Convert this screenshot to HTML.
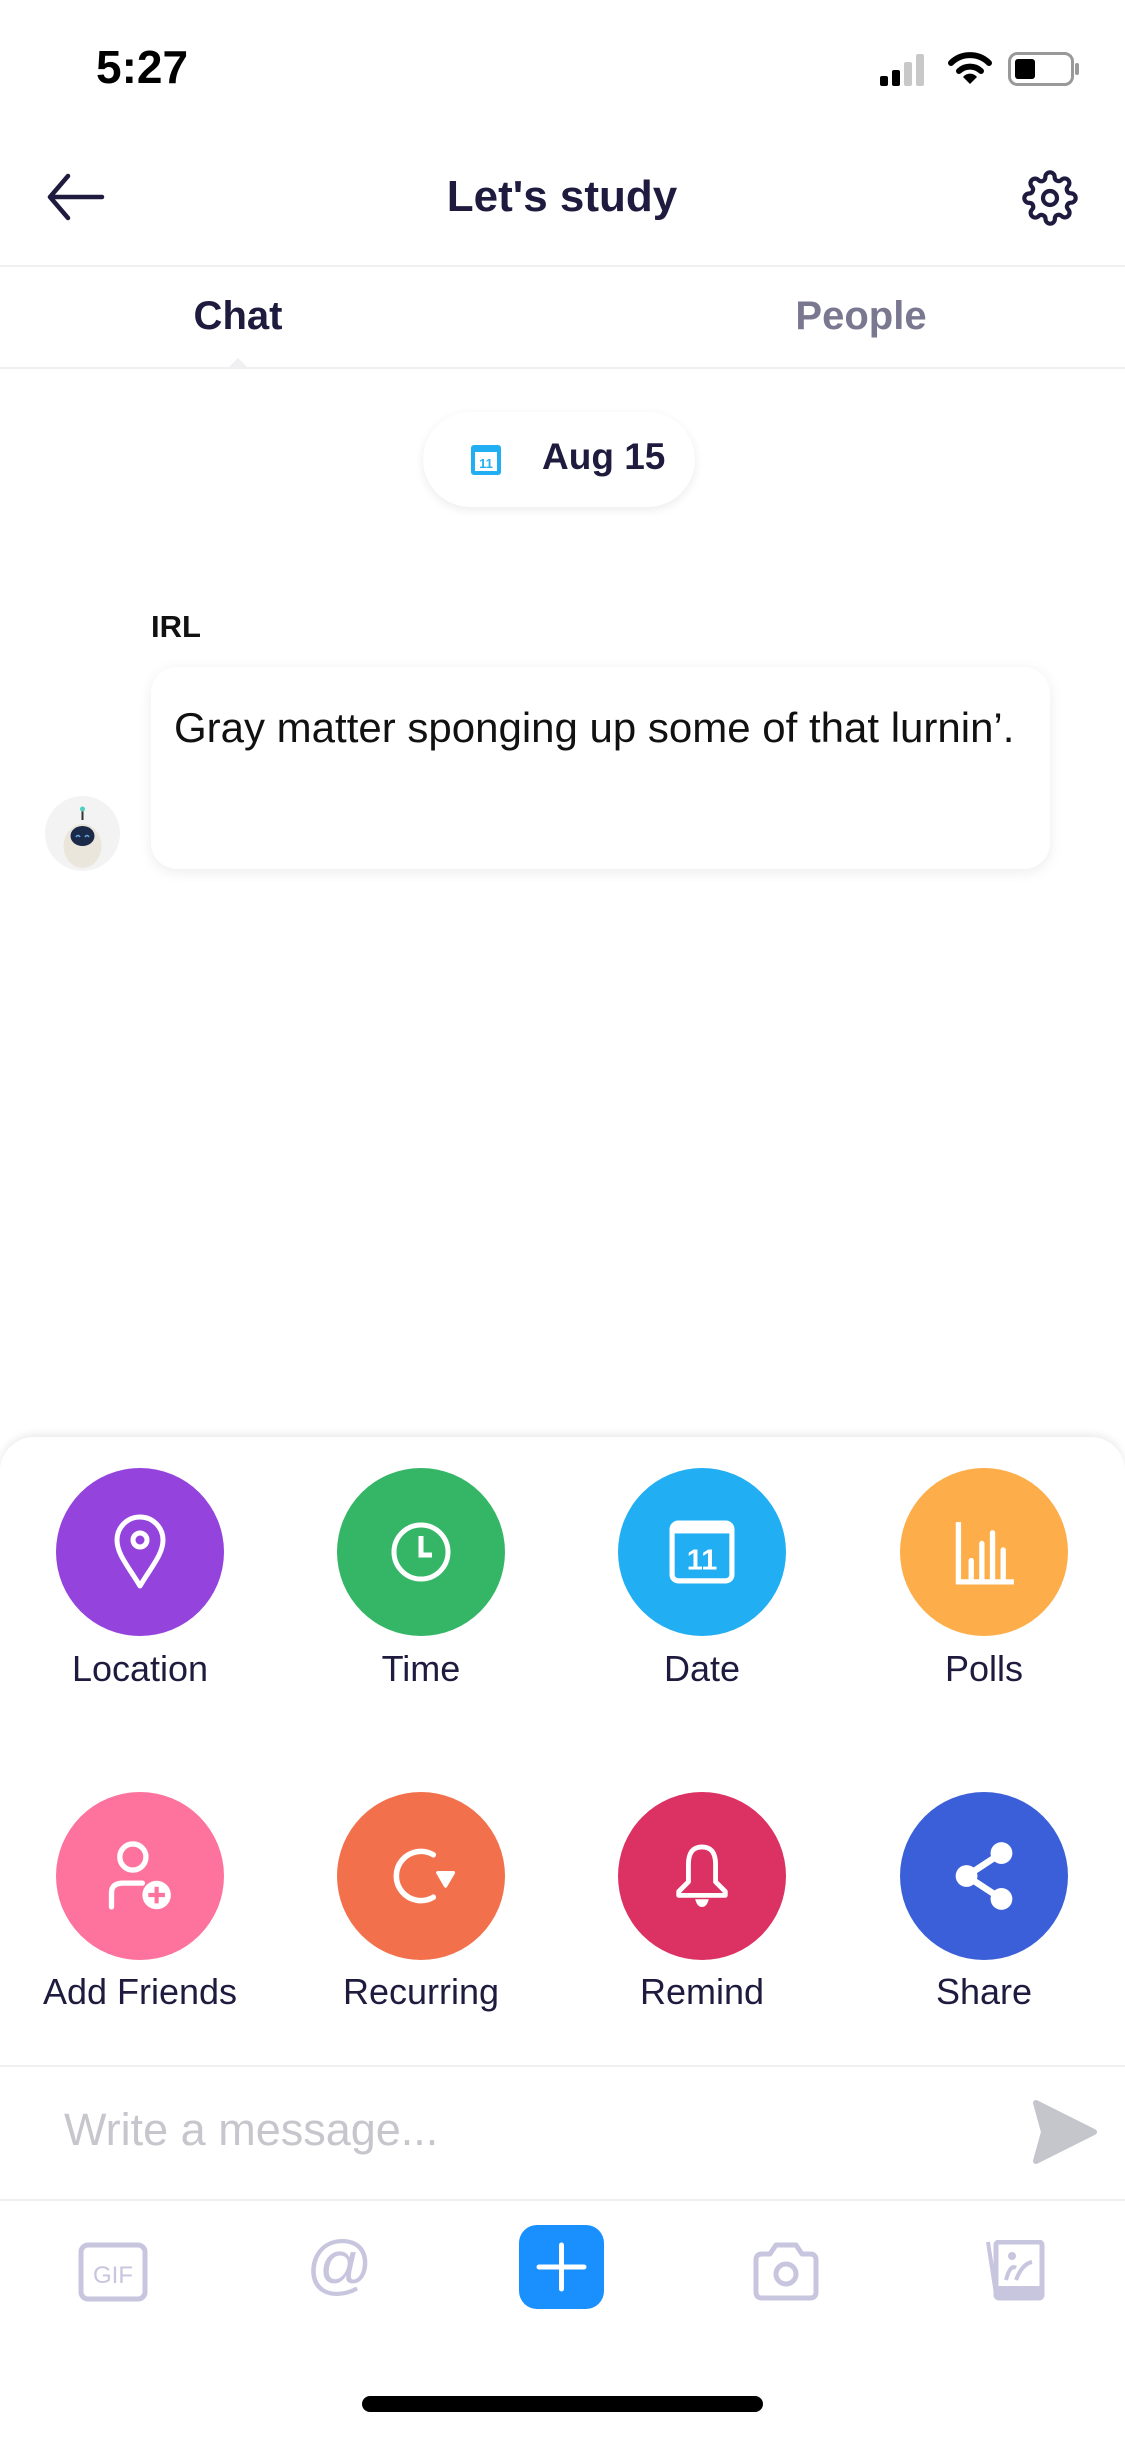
<!DOCTYPE html>
<html><head><meta charset="utf-8"><style>
*{margin:0;padding:0;box-sizing:border-box}
body{width:1125px;height:2436px;background:#fff;font-family:"Liberation Sans",sans-serif;position:relative;overflow:hidden;color:#1e1b3f}
.a{position:absolute}
.c{position:absolute;width:168px;height:168px;border-radius:50%;display:flex;align-items:center;justify-content:center}
.lbl{position:absolute;width:260px;text-align:center;font-size:36px;color:#1e1b3f}
.t{position:absolute;transform:translateX(-50%);white-space:nowrap}
</style></head><body>
<div class="a" style="left:96px;top:40px;font-size:46px;font-weight:600;color:#000">5:27</div>
<svg class="a" style="left:878px;top:52px" width="56" height="36"><rect x="2" y="24" width="8" height="10" rx="2" fill="#000"/><rect x="14" y="18" width="8" height="16" rx="2" fill="#000"/><rect x="26" y="10" width="8" height="24" rx="2" fill="#c8c8c8"/><rect x="38" y="2" width="8" height="32" rx="2" fill="#c8c8c8"/></svg>
<svg class="a" style="left:948px;top:50px" width="44" height="36" viewBox="0 0 44 36"><path d="M3 13 A27 27 0 0 1 41 13" stroke="#000" stroke-width="6" fill="none" stroke-linecap="round"/><path d="M11 21 A16 16 0 0 1 33 21" stroke="#000" stroke-width="6" fill="none" stroke-linecap="round"/><path d="M22 34 L15 27 A9 9 0 0 1 29 27 Z" fill="#000"/></svg>
<svg class="a" style="left:1008px;top:52px" width="72" height="34"><rect x="1.5" y="1.5" width="63" height="31" rx="8" stroke="#999" stroke-width="3" fill="none"/><rect x="7" y="7" width="20" height="20" rx="3" fill="#000"/><rect x="67" y="11" width="4" height="12" rx="2" fill="#999"/></svg>
<svg class="a" style="left:46px;top:172px" width="60" height="50"><path d="M22 4 L4 25 L22 46 M4 25 H56" stroke="#1e1b3f" stroke-width="4.5" fill="none" stroke-linecap="round" stroke-linejoin="round"/></svg>
<div class="t" style="left:562px;top:172px;font-size:44px;font-weight:700;">Let's study</div>
<svg class="a" style="left:1022px;top:170px" width="56" height="56" viewBox="0 0 24 24"><path d="M12 15a3 3 0 1 0 0-6 3 3 0 0 0 0 6z" stroke="#1e1b3f" stroke-width="1.8" fill="none"/><path d="M19.4 15a1.650 1.650 0 0 0 .33 1.82l.06.06a2 2 0 1 1-2.83 2.830l-.06-.06a1.65 1.65 0 0 0-1.820-.33 1.65 1.65 0 0 0-1 1.51V21a2 2 0 1 1-4 0v-.09A1.65 1.65 0 0 0 9 19.4a1.65 1.65 0 0 0-1.82.33l-.06.06a2 2 0 1 1-2.83-2.83l.06-.06a1.65 1.65 0 0 0 .33-1.82 1.65 1.65 0 0 0-1.51-1H3a2 2 0 1 1 0-4h.09A1.65 1.65 0 0 0 4.6 9a1.65 1.65 0 0 0-.33-1.82l-.06-.06a2 2 0 1 1 2.83-2.83l.06.06a1.65 1.65 0 0 0 1.82.33H9a1.65 1.65 0 0 0 1-1.51V3a2 2 0 1 1 4 0v.09a1.65 1.65 0 0 0 1 1.51 1.65 1.65 0 0 0 1.82-.33l.06-.06a2 2 0 1 1 2.83 2.83l-.06.06a1.65 1.65 0 0 0-.33 1.82V9a1.65 1.65 0 0 0 1.51 1H21a2 2 0 1 1 0 4h-.09a1.65 1.65 0 0 0-1.51 1z" stroke="#1e1b3f" stroke-width="1.8" fill="none"/></svg>
<div class="a" style="left:0;top:265px;width:1125px;height:2px;background:#f0f0f3"></div>
<div class="t" style="left:238px;top:294px;font-size:40px;font-weight:700;">Chat</div>
<div class="t" style="left:861px;top:294px;font-size:40px;font-weight:600;color:#7a7891">People</div>
<div class="a" style="left:0;top:367px;width:1125px;height:2px;background:#f0f0f3"></div>
<div class="a" style="left:228px;top:358px;width:0;height:0;border-left:10px solid transparent;border-right:10px solid transparent;border-bottom:10px solid #f0f0f3"></div>
<div class="a" style="left:423px;top:412px;width:272px;height:95px;border-radius:48px;background:#fff;box-shadow:0 3px 10px rgba(0,0,0,.08)"></div>
<svg class="a" style="left:469px;top:443px" width="34" height="34"><rect x="2" y="2" width="30" height="30" rx="3" fill="#22aef2"/><rect x="6" y="9" width="22" height="19" fill="#fff"/><text x="17" y="25" font-size="13" font-weight="700" fill="#22aef2" text-anchor="middle" font-family="Liberation Sans">11</text></svg>
<div class="a" style="left:542px;top:436px;font-size:37px;font-weight:700;">Aug 15</div>
<div class="a" style="left:151px;top:609px;font-size:31px;font-weight:600;color:#111">IRL</div>
<div class="a" style="left:151px;top:667px;width:899px;height:202px;border-radius:26px;background:#fff;box-shadow:0 3px 14px rgba(0,0,0,.08)"></div>
<div class="a" style="left:174px;top:704px;font-size:42px;color:#111">Gray matter sponging up some of that lurnin’.</div>
<div class="a" style="left:45px;top:796px;width:75px;height:75px;border-radius:50%;background:#f3f3f3"></div>
<svg class="a" style="left:45px;top:796px" width="75" height="75"><line x1="37.5" y1="12" x2="37.5" y2="24" stroke="#333" stroke-width="2"/><circle cx="37.5" cy="13" r="2.5" fill="#4dd0c0"/><ellipse cx="37.5" cy="50" rx="19" ry="22" fill="#ebe6dc"/><ellipse cx="37.5" cy="40" rx="12" ry="10" fill="#1c2a4a"/><path d="M31 41q2-3 4 0M40 41q2-3 4 0" stroke="#6ad" stroke-width="1.5" fill="none"/></svg>
<div class="a" style="left:0;top:1437px;width:1125px;height:1000px;border-radius:34px 34px 0 0;background:#fff;box-shadow:0 -3px 8px rgba(0,0,0,.08)"></div>
<div class="c" style="left:56px;top:1468px;background:#9444dc"><svg width="60" height="86" viewBox="0 0 60 80"><path d="M30 74 C18 54 7 42 7 28 A23 23 0 0 1 53 28 C53 42 42 54 30 74Z" stroke="#fff" stroke-width="5" fill="none" stroke-linejoin="round"/><circle cx="30" cy="28" r="7" stroke="#fff" stroke-width="5" fill="none"/></svg></div>
<div class="c" style="left:337px;top:1468px;background:#35b667"><svg width="64" height="64"><circle cx="32" cy="32" r="27" stroke="#fff" stroke-width="5" fill="none"/><path d="M32 16 V35 H43" stroke="#fff" stroke-width="5" fill="none"/></svg></div>
<div class="c" style="left:618px;top:1468px;background:#22aef2"><svg width="70" height="66" viewBox="0 0 66 64"><rect x="4" y="4" width="58" height="56" rx="6" stroke="#fff" stroke-width="5" fill="none"/><rect x="4" y="4" width="58" height="10" fill="#fff"/><text x="33" y="49" font-size="28" font-weight="700" fill="#fff" text-anchor="middle" font-family="Liberation Sans">11</text></svg></div>
<div class="c" style="left:900px;top:1468px;background:#fdad4a"><svg width="64" height="70" viewBox="0 0 60 64"><path d="M6 4 V60 H58" stroke="#fff" stroke-width="5" fill="none"/><path d="M18 40 V58 M28 24 V58 M38 14 V58 M48 30 V58" stroke="#fff" stroke-width="5" stroke-linecap="round"/></svg></div>
<div class="lbl" style="left:10px;top:1648px">Location</div>
<div class="lbl" style="left:291px;top:1648px">Time</div>
<div class="lbl" style="left:572px;top:1648px">Date</div>
<div class="lbl" style="left:854px;top:1648px">Polls</div>
<div class="c" style="left:56px;top:1792px;background:#fd739d"><svg width="76" height="76" viewBox="0 0 64 64"><circle cx="26" cy="16" r="11" stroke="#fff" stroke-width="4.5" fill="none"/><path d="M8 58 V46 Q8 38 18 38 H34" stroke="#fff" stroke-width="4.5" fill="none" stroke-linecap="round"/><circle cx="46" cy="48" r="12" fill="#fff"/><path d="M46 41 V55 M39 48 H53" stroke="#fd739d" stroke-width="3.5"/></svg></div>
<div class="c" style="left:337px;top:1792px;background:#f2714c"><svg width="72" height="76" viewBox="0 0 64 68"><path d="M43 15 A22 22 0 1 0 43 53" stroke="#fff" stroke-width="5" fill="none" stroke-linecap="round"/><path d="M47 31 L61 31 L54 43Z" fill="#fff" stroke="#fff" stroke-width="3" stroke-linejoin="round"/></svg></div>
<div class="c" style="left:618px;top:1792px;background:#dc3263"><svg width="62" height="76" viewBox="0 0 64 68"><path d="M32 4 Q18 4 18 22 V40 L8 50 V54 H56 V50 L46 40 V22 Q46 4 32 4Z" stroke="#fff" stroke-width="5" fill="none" stroke-linejoin="round"/><path d="M25 58 H39 Q37 66 32 66 Q27 66 25 58Z" fill="#fff"/></svg></div>
<div class="c" style="left:900px;top:1792px;background:#3a5fd8"><svg width="70" height="72" viewBox="0 0 64 66"><path d="M48 12 L16 33 L48 54" stroke="#fff" stroke-width="6" fill="none"/><circle cx="48" cy="12" r="10" fill="#fff"/><circle cx="16" cy="33" r="10" fill="#fff"/><circle cx="48" cy="54" r="10" fill="#fff"/></svg></div>
<div class="lbl" style="left:10px;top:1971px">Add Friends</div>
<div class="lbl" style="left:291px;top:1971px">Recurring</div>
<div class="lbl" style="left:572px;top:1971px">Remind</div>
<div class="lbl" style="left:854px;top:1971px">Share</div>
<div class="a" style="left:0;top:2065px;width:1125px;height:2px;background:#f0f0f3"></div>
<div class="a" style="left:64px;top:2104px;font-size:45px;color:#c7c6cd">Write a message...</div>
<svg class="a" style="left:1030px;top:2099px" width="68" height="66"><path d="M6 4 L64 33 L6 62 L14 33Z" fill="#c5c5cc" stroke="#c5c5cc" stroke-width="6" stroke-linejoin="round"/></svg>
<div class="a" style="left:0;top:2199px;width:1125px;height:2px;background:#f0f0f3"></div>
<svg class="a" style="left:78px;top:2242px" width="70" height="60"><rect x="3" y="3" width="64" height="54" rx="7" stroke="#c8c5de" stroke-width="5" fill="none"/><text x="35" y="41" font-size="24" fill="#c8c5de" text-anchor="middle" font-family="Liberation Sans">GIF</text></svg>
<div class="a" style="left:306px;top:2226px;font-size:66px;color:#c8c5de">@</div>
<div class="a" style="left:519px;top:2225px;width:85px;height:84px;border-radius:18px;background:#1a90ff"></div>
<svg class="a" style="left:519px;top:2225px" width="85" height="84"><path d="M42.5 20 V64 M20 42 H65" stroke="#fff" stroke-width="5" stroke-linecap="round"/></svg>
<svg class="a" style="left:752px;top:2240px" width="68" height="62"><path d="M4 20 Q4 14 10 14 H18 L24 5 H44 L50 14 H58 Q64 14 64 20 V52 Q64 58 58 58 H10 Q4 58 4 52Z" stroke="#c8c5de" stroke-width="5" fill="none" stroke-linejoin="round"/><circle cx="34" cy="34" r="10" stroke="#c8c5de" stroke-width="5" fill="none"/></svg>
<svg class="a" style="left:982px;top:2240px" width="64" height="64"><path d="M6 2 L14 54" stroke="#c8c5de" stroke-width="4"/><rect x="14" y="2" width="46" height="56" rx="3" stroke="#c8c5de" stroke-width="5" fill="none"/><rect x="14" y="46" width="46" height="12" fill="#c8c5de"/><circle cx="30" cy="16" r="4" fill="#c8c5de"/><path d="M24 40 Q28 24 34 28 M34 40 Q40 24 50 22" stroke="#c8c5de" stroke-width="4" fill="none"/></svg>
<div class="a" style="left:362px;top:2396px;width:401px;height:16px;border-radius:8px;background:#000"></div>
</body></html>
